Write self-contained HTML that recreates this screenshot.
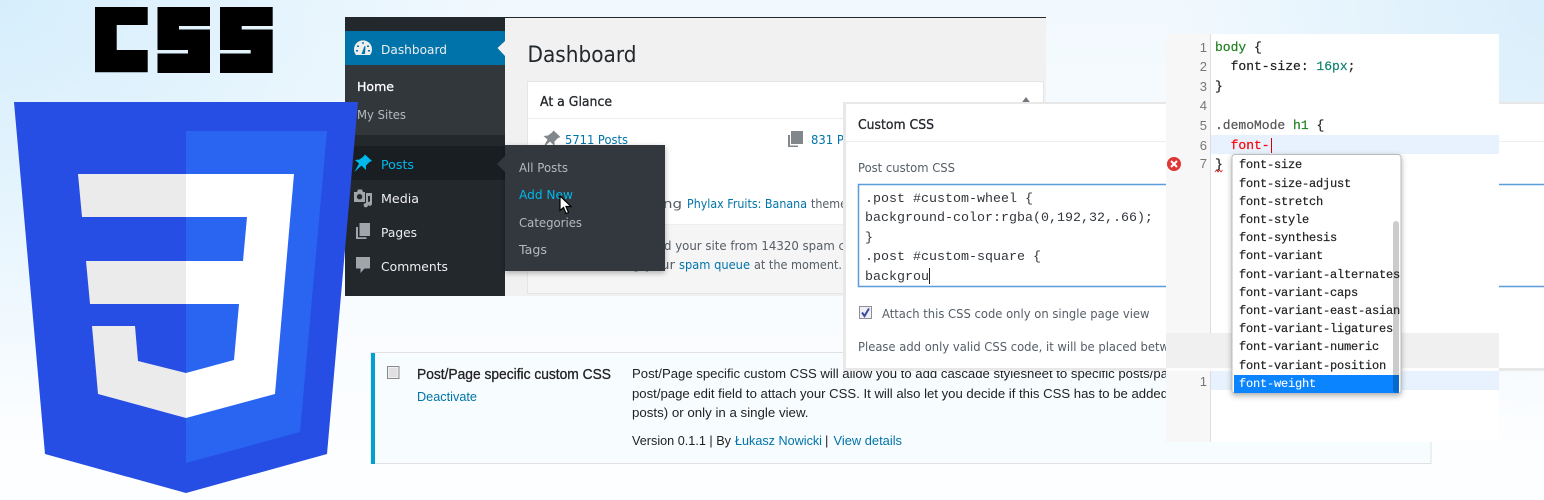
<!DOCTYPE html>
<html><head><meta charset="utf-8"><style>
html,body{margin:0;padding:0;width:1544px;height:500px;overflow:hidden;background:#fbfdff}
body{background:radial-gradient(ellipse 520px 420px at 0 0,#d6eefc 0%,rgba(214,238,252,0) 100%),radial-gradient(ellipse 380px 420px at 1544px 0,#d9eefb 0%,rgba(217,238,251,0) 100%),linear-gradient(180deg,#f2f9fe 0%,#fdfeff 100%)}
svg{display:block;position:absolute;left:0;top:0}
text{font-family:"DejaVu Sans","Liberation Sans",sans-serif;font-size:12.5px;white-space:pre}
.m{font-family:"Liberation Mono",monospace;font-size:13.33px}
.e{font-family:"Liberation Mono",monospace;font-size:13px;fill:#222;stroke:#222;stroke-width:.2px}
.p{font-family:"Liberation Mono",monospace;font-size:12px;letter-spacing:-.2px;fill:#222;stroke:#222;stroke-width:.2px}
.n{font-family:"Liberation Sans",sans-serif;font-size:13px;fill:#777}
.l{font-family:"Liberation Sans",sans-serif;font-size:13px;fill:#222}
.h{fill:#23282d;stroke:#23282d;stroke-width:.3px;font-size:13px}
.a{fill:#0073aa}
.g{fill:#555d66}
</style></head><body>
<svg width="1544" height="500" viewBox="0 0 1544 500" xmlns="http://www.w3.org/2000/svg">
<defs>
<filter id="s" x="-10%" y="-10%" width="120%" height="120%"><feDropShadow dx="0" dy="2" stdDeviation="3" flood-color="#000" flood-opacity=".3"/></filter>
</defs>

<!-- WP panel -->
<rect x="505" y="18" width="541" height="278" fill="#f1f1f1"/>
<rect x="345" y="18" width="160" height="278" fill="#23282d"/>
<rect x="345" y="17" width="701" height="1" fill="#23282d"/>
<rect x="345" y="31" width="160" height="34" fill="#0073aa"/>
<rect x="345" y="65" width="160" height="70" fill="#32373c"/>
<rect x="345" y="146" width="160" height="34" fill="#191e23"/>
<polygon points="505,41 497.5,48 505,56" fill="#f1f1f1"/>

<!-- CSS3 logo -->
<path fill="#000" d="M95 7H147.700V25H116.700V50H147.700V72.300H95Z"/>
<path fill="#000" d="M157.500 7H210V26H179V29.500H210V73H157.500V53.500H188V50H157.500Z"/>
<path fill="#000" d="M220 7H272.700V26H241.700V29.500H272.700V73H220V53.500H250.700V50H220Z"/>
<polygon fill="#264de4" points="14,102 358,102 327,454 186,493 45,454"/>
<polygon fill="#2965f1" points="186,131 327,131 300,432 186,463"/>
<path fill="#ebebeb" d="M78 174H186V217H82ZM86 261H186V304H90ZM92 326H135L138 361L186 373V418L98 394Z"/>
<path fill="#fff" d="M186 174H294L275 394L186 418V373L234 360L239 304H186V261H243L247 217H186Z"/>

<!-- sidebar icons -->
<path fill="#eee" d="M356 55 A9 9 0 1 1 370 55 Z"/>
<g fill="#0073aa"><rect x="362.300" y="42" width="1.400" height="2"/><rect x="357" y="45.500" width="2" height="1.500"/><rect x="367" y="45.500" width="2" height="1.500"/><rect x="356" y="50" width="2" height="1.500"/><rect x="368" y="50" width="2" height="1.500"/><path d="M361.500 54 L364.500 46 L365.500 46.500 L365 54Z"/></g>
<path fill="#00b9eb" d="M365 154.500L372 161L369.500 162L366 165.500L366 170L361.500 165.500L354.500 172L359 163.500L355 160L359.500 159.500L363.500 156.500Z"/>
<path fill="#a0a5aa" fill-rule="evenodd" d="M354 192H357L358 189.500H362L363 192H365V202H354ZM359.500 194A2.700 2.700 0 1 0 359.600 199.400A2.700 2.700 0 1 0 359.500 194Z"/>
<path fill="#a0a5aa" d="M366 193H372V203.500A2.200 2.200 0 1 1 370 201.500V196H368V205A2.200 2.200 0 1 1 366 203Z"/>
<path fill="#a0a5aa" d="M359.500 223H370V236H359.500ZM356 227H358V237.300H366.500V239H356Z"/>
<path fill="#a0a5aa" d="M356 257H370V268.500H364.500L360.500 273V268.500H356Z"/>

<!-- sidebar text -->
<text x="381" y="54" textLength="66" lengthAdjust="spacingAndGlyphs" fill="#eee">Dashboard</text>
<text x="357" y="91" textLength="37" lengthAdjust="spacingAndGlyphs" fill="#fff" stroke="#fff" stroke-width=".3">Home</text>
<text x="357" y="119" textLength="49" lengthAdjust="spacingAndGlyphs" fill="#b4b9be">My Sites</text>
<text x="381" y="169" textLength="33" lengthAdjust="spacingAndGlyphs" fill="#00b9eb">Posts</text>
<text x="381" y="203" textLength="38" lengthAdjust="spacingAndGlyphs" fill="#eee">Media</text>
<text x="381" y="237" textLength="36" lengthAdjust="spacingAndGlyphs" fill="#eee">Pages</text>
<text x="381" y="271" textLength="67" lengthAdjust="spacingAndGlyphs" fill="#eee">Comments</text>

<!-- dashboard content -->
<text x="527.500" y="62" textLength="109" lengthAdjust="spacingAndGlyphs" fill="#23282d" style="font-size:22px">Dashboard</text>
<rect x="527.500" y="81.500" width="516" height="212" fill="#fff" stroke="#e5e5e5"/>
<line x1="528" y1="118.500" x2="1043" y2="118.500" stroke="#eee"/>
<rect x="528" y="224" width="515" height="69" fill="#f5f5f5"/>
<line x1="528" y1="224.500" x2="1043" y2="224.500" stroke="#eee"/>
<text x="540" y="106" textLength="72" lengthAdjust="spacingAndGlyphs" class="h">At a Glance</text>
<polygon points="1021.500,103 1026,97 1030.500,103" fill="#72777c"/>
<path fill="#82878c" transform="translate(188.500,-24)" d="M365 154.500L372 161L369.500 162L366 165.500L366 170L361.500 165.500L354.500 172L359 163.500L355 160L359.500 159.500L363.500 156.500Z"/>
<text x="565" y="144" textLength="63" lengthAdjust="spacingAndGlyphs" class="a">5711 Posts</text>
<path fill="#82878c" d="M791 131H803V144H791ZM788 135H790V145.500H798V147H788Z"/>
<text x="811" y="144" textLength="60" lengthAdjust="spacingAndGlyphs" class="a">831 Pages</text>
<text x="640" y="208" textLength="42" lengthAdjust="spacingAndGlyphs" class="g">Using</text>
<text x="687" y="208" textLength="120" lengthAdjust="spacingAndGlyphs" class="a">Phylax Fruits: Banana</text>
<text x="811" y="208" textLength="36" lengthAdjust="spacingAndGlyphs" class="g">theme</text>
<text x="664" y="250" textLength="181" lengthAdjust="spacingAndGlyphs" class="g">d your site from 14320 spam c</text>
<text x="620" y="269" textLength="55" lengthAdjust="spacingAndGlyphs" class="g">ing your</text>
<text x="679" y="269" textLength="71" lengthAdjust="spacingAndGlyphs" class="a">spam queue</text>
<text x="754" y="269" textLength="88" lengthAdjust="spacingAndGlyphs" class="g">at the moment.</text>

<!-- flyout -->
<rect x="505" y="145" width="160" height="126" fill="#32373c" filter="url(#s)"/>
<polygon points="505,156 497,164 505,172" fill="#32373c"/>
<text x="519" y="172" textLength="49" lengthAdjust="spacingAndGlyphs" fill="#b4b9be">All Posts</text>
<text x="519" y="199" textLength="54" lengthAdjust="spacingAndGlyphs" fill="#00b9eb">Add New</text>
<text x="519" y="227" textLength="63" lengthAdjust="spacingAndGlyphs" fill="#b4b9be">Categories</text>
<text x="519" y="254" textLength="28" lengthAdjust="spacingAndGlyphs" fill="#b4b9be">Tags</text>
<path d="M560 196V210.500L563.500 207.500L566 213.500L568.500 212.500L566 206.500H571Z" fill="#fff" stroke="#000" stroke-width="1.200"/>

<!-- plugin row -->
<rect x="371" y="352.500" width="1060" height="111" fill="#f7fcfe" stroke="#e1e1e1"/>
<rect x="371" y="353" width="4" height="111" fill="#00a0d2"/>
<rect x="387.500" y="366.500" width="11.500" height="12" fill="#f0f0f0" stroke="#8a8a8a"/>
<rect x="389" y="368" width="8.500" height="9" fill="#e0e0e0"/>
<text x="417" y="379" textLength="194" lengthAdjust="spacingAndGlyphs" class="l" stroke="#222" stroke-width=".3" style="font-size:14.500px">Post/Page specific custom CSS</text>
<text x="417" y="401" textLength="60" lengthAdjust="spacingAndGlyphs" class="l a" style="fill:#0073aa">Deactivate</text>
<text x="632" y="378" textLength="536" lengthAdjust="spacingAndGlyphs" class="l">Post/Page specific custom CSS will allow you to add cascade stylesheet to specific posts/pa</text>
<text x="632" y="398" textLength="536" lengthAdjust="spacingAndGlyphs" class="l">post/page edit field to attach your CSS. It will also let you decide if this CSS has to be added</text>
<text x="632" y="417" textLength="176.500" lengthAdjust="spacingAndGlyphs" class="l">posts) or only in a single view.</text>
<text x="632" y="445" textLength="99" lengthAdjust="spacingAndGlyphs" class="l">Version 0.1.1 | By</text>
<text x="735" y="445" textLength="87" lengthAdjust="spacingAndGlyphs" class="l" style="fill:#0073aa">Łukasz Nowicki</text>
<text x="825" y="445" class="l">|</text>
<text x="833.500" y="445" textLength="68.500" lengthAdjust="spacingAndGlyphs" class="l" style="fill:#0073aa">View details</text>

<!-- modal -->
<rect x="843" y="102" width="701" height="269" fill="#e8e8e8"/>
<rect x="846" y="104" width="698" height="264" fill="#fff"/>
<line x1="846" y1="141.500" x2="1544" y2="141.500" stroke="#eee"/>
<text x="858" y="129" textLength="76" lengthAdjust="spacingAndGlyphs" class="h">Custom CSS</text>
<text x="858" y="172" textLength="97" lengthAdjust="spacingAndGlyphs" class="g">Post custom CSS</text>
<rect x="858.500" y="184.500" width="700" height="102" fill="#fff" stroke="#5b9dd9" stroke-width="1.500"/>
<text class="m" x="865" y="202" fill="#32373c">.post #custom-wheel {</text>
<text class="m" x="865" y="221" fill="#32373c">background-color:rgba(0,192,32,.66);</text>
<text class="m" x="865" y="241" fill="#32373c">}</text>
<text class="m" x="865" y="260" fill="#32373c">.post #custom-square {</text>
<text class="m" x="865" y="280" fill="#32373c">backgrou</text>
<rect x="929" y="268" width="1" height="16" fill="#222"/>
<rect x="859.500" y="306.500" width="12" height="12" fill="#eef0f4" stroke="#8f8f9c"/>
<path d="M862 312.500L864.500 316L869 308.500" fill="none" stroke="#3c4a9c" stroke-width="2"/>
<text x="882" y="318" textLength="267.500" lengthAdjust="spacingAndGlyphs" class="g">Attach this CSS code only on single page view</text>
<text x="858" y="351" textLength="311" lengthAdjust="spacingAndGlyphs" class="g">Please add only valid CSS code, it will be placed betw</text>

<!-- editor -->
<rect x="1166" y="34" width="333" height="408" fill="#fff"/>
<rect x="1166" y="34" width="44" height="408" fill="#f7f7f7"/>
<rect x="1210" y="34" width="1" height="408" fill="#ddd"/>
<rect x="1211" y="135" width="288" height="19" fill="#e8f2fe"/>
<rect x="1166" y="333" width="333" height="35" fill="#f0f0f0"/>
<rect x="1166" y="368" width="333" height="3" fill="#fdfdfd"/>
<rect x="1211" y="371" width="288" height="19" fill="#e8f2fe"/>
<text class="n" x="1207" y="52" text-anchor="end">1</text>
<text class="n" x="1207" y="71" text-anchor="end">2</text>
<text class="n" x="1207" y="91" text-anchor="end">3</text>
<text class="n" x="1207" y="110" text-anchor="end">4</text>
<text class="n" x="1207" y="130" text-anchor="end">5</text>
<text class="n" x="1207" y="150" text-anchor="end">6</text>
<text class="n" x="1207" y="168" text-anchor="end">7</text>
<text class="n" x="1207" y="386" text-anchor="end">1</text>
<circle cx="1174" cy="164" r="7" fill="#df3636"/>
<path d="M1171 161L1177 167M1177 161L1171 167" stroke="#fff" stroke-width="2"/>
<text class="e" x="1215" y="51"><tspan style="fill:#1d7f1d;stroke:#1d7f1d">body</tspan><tspan> {</tspan></text>
<text class="e" x="1215" y="70">  font-size: <tspan style="fill:#0f7f6f;stroke:#0f7f6f">16px</tspan>;</text>
<text class="e" x="1215" y="90">}</text>
<text class="e" x="1215" y="129"><tspan style="fill:#555;stroke:#555">.demoMode</tspan> <tspan style="fill:#1d7f1d;stroke:#1d7f1d">h1</tspan> {</text>
<text class="e" x="1215" y="149" style="fill:#f00;stroke:#f00">  font-</text>
<rect x="1271" y="138" width="1" height="15" fill="#d00"/>
<text class="e" x="1215" y="168">}</text>
<path d="M1215 172L1216.500 170L1218 172L1219.500 170L1221 172L1222.500 170" fill="none" stroke="#e02020" stroke-width=".8"/>

<!-- autocomplete -->
<rect x="1232" y="154.500" width="169" height="239" rx="3" fill="#fff" stroke="#bbb" filter="url(#s)"/>
<rect x="1234" y="375" width="165" height="18" fill="#0a84ff"/>
<rect x="1393" y="221" width="6" height="172" rx="3" fill="#000" fill-opacity=".2"/>
<text class="p" x="1239" y="168">font-size</text>
<text class="p" x="1239" y="187">font-size-adjust</text>
<text class="p" x="1239" y="205">font-stretch</text>
<text class="p" x="1239" y="223">font-style</text>
<text class="p" x="1239" y="241">font-synthesis</text>
<text class="p" x="1239" y="259">font-variant</text>
<text class="p" x="1239" y="278">font-variant-alternates</text>
<text class="p" x="1239" y="296">font-variant-caps</text>
<text class="p" x="1239" y="314">font-variant-east-asian</text>
<text class="p" x="1239" y="332">font-variant-ligatures</text>
<text class="p" x="1239" y="350">font-variant-numeric</text>
<text class="p" x="1239" y="369">font-variant-position</text>
<text class="p" x="1239" y="387" style="fill:#fff;stroke:#fff;stroke-width:.1px">font-weight</text>
</svg>
</body></html>
